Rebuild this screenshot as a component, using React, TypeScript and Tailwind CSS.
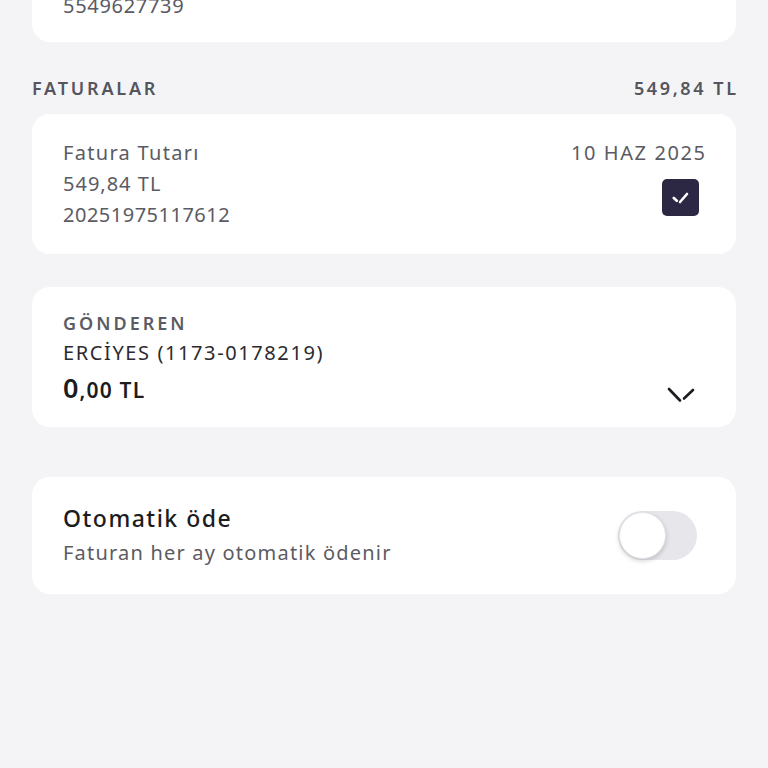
import React from "react";

export default function App() {
  const font = { fontFamily: "'Noto Sans', 'Open Sans', sans-serif" };
  return (
    <div className="w-[768px] h-[768px] overflow-hidden bg-[#f4f4f6]" style={font}>
      <div className="px-[32px] flex flex-col">
        {/* top card (cut off) */}
        <div className="-mt-[22px] bg-white rounded-[18px] pt-[16px] pb-[24px] px-[31px]">
          <div className="text-[20px] leading-[24px] tracking-[0.7px] text-[#5b5b63]">5549627739</div>
        </div>

        {/* header */}
        <div className="mt-[34px] flex items-center justify-between h-[24px]">
          <span className="text-[18px] font-semibold tracking-[2.8px] text-[#55555d]">FATURALAR</span>
          <span className="text-[18px] font-semibold tracking-[2.6px] -mr-[2.6px] text-[#55555d]">549,84 TL</span>
        </div>

        {/* invoice card */}
        <div className="mt-[14px] bg-white rounded-[18px] px-[31px] pt-[23px] pb-[24px] flex justify-between">
          <div className="flex flex-col text-[20px] leading-[31px] text-[#5b5b63]">
            <span className="tracking-[1.3px]">Fatura Tutarı</span>
            <span className="tracking-[1px]">549,84 TL</span>
            <span className="tracking-[0.5px]">20251975117612</span>
          </div>
          <div className="flex flex-col items-end">
            <span className="text-[20px] leading-[31px] tracking-[1.6px] -mr-[1.6px] text-[#5b5b63]">10 HAZ 2025</span>
            <div className="mt-[11px] mr-[6px] w-[37px] h-[37px] rounded-[5px] bg-[#2c2742] flex items-center justify-center">
              <svg width="17" height="12" viewBox="0 0 17 12" fill="none">
                <path d="M1.8 6 L4.8 8.8" stroke="white" strokeWidth="2.6" strokeLinecap="round" />
                <path d="M8 10 L15 2" stroke="white" strokeWidth="2.6" strokeLinecap="round" />
              </svg>
            </div>
          </div>
        </div>

        {/* sender card */}
        <div className="mt-[33px] bg-white rounded-[18px] px-[31px] pt-[23px] pb-[17px] flex items-end justify-between">
          <div className="flex flex-col">
            <span className="text-[18px] leading-[26px] font-semibold tracking-[3px] text-[#5b5b63]">GÖNDEREN</span>
            <span className="text-[20px] leading-[34px] tracking-[1.6px] text-[#2a2a2f]">ERCİYES (1173-0178219)</span>
            <span className="leading-[36px] text-[#1c1c20] font-semibold">
              <span className="text-[27px] tracking-[1px]">0</span>
              <span className="text-[21px] tracking-[1.2px]">,00 TL</span>
            </span>
          </div>
          <svg className="mb-[6px] mr-[8px]" width="30" height="18" viewBox="0 0 30 18" fill="none">
            <path d="M2 3 L13 14.5" stroke="#1c1c20" strokeWidth="2.6" strokeLinecap="round" />
            <path d="M17 12.5 L26 4" stroke="#1c1c20" strokeWidth="2.6" strokeLinecap="round" />
          </svg>
        </div>

        {/* auto pay card */}
        <div className="mt-[50px] bg-white rounded-[18px] pl-[31px] pr-[39px] h-[117px] flex items-center justify-between">
          <div className="flex flex-col">
            <span className="text-[23px] leading-[34px] font-medium tracking-[1.5px] text-[#1c1c20]">Otomatik öde</span>
            <span className="text-[20px] leading-[36px] tracking-[1.2px] text-[#5b5b63]">Faturan her ay otomatik ödenir</span>
          </div>
          <div className="w-[79px] h-[49px] rounded-full bg-[#e6e6eb] relative">
            <div className="absolute left-[1px] top-[1px] w-[47px] h-[47px] rounded-full bg-white shadow-[0_2px_5px_rgba(0,0,0,0.18)] border border-[#e4e4e8]" />
          </div>
        </div>
      </div>
    </div>
  );
}
